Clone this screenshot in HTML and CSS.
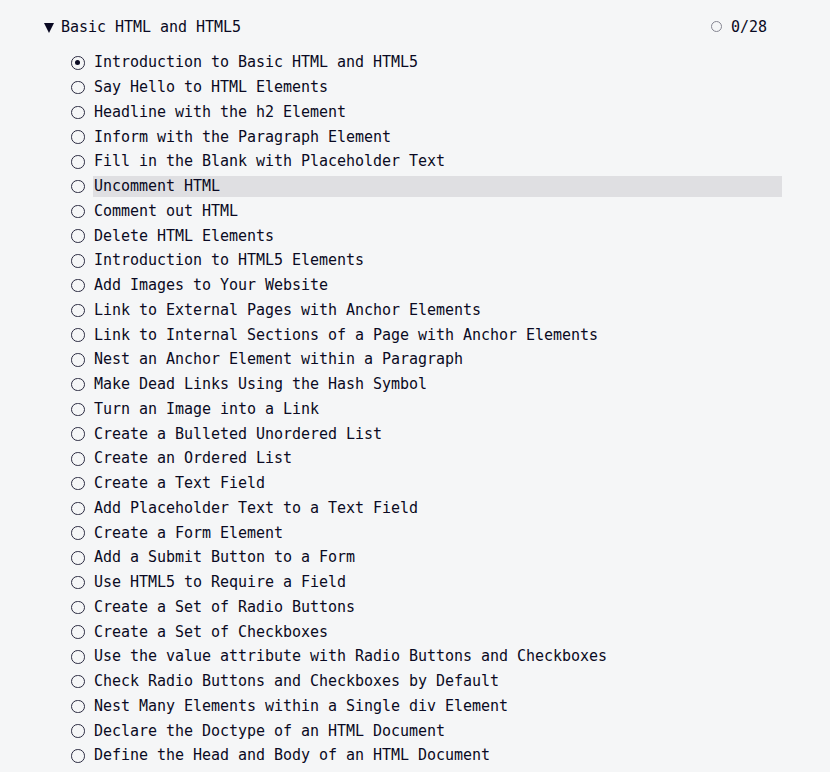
FILE: index.html
```html
<!DOCTYPE html>
<html>
<head>
<meta charset="utf-8">
<link rel="stylesheet" href="styles.css">
</head>
<body>
<div class="block">
  <div class="block-header">
    <svg class="caret" width="10" height="10" viewBox="0 0 10 10"><polygon points="0,0 10,0 5,10" fill="#0a0a23"/></svg>
    <span class="title">Basic HTML and HTML5</span>
    <span class="count"><span class="count-ring"></span>0/28</span>
  </div>
  <ul class="steps">
    <li class="step"><span class="radio checked"></span><span class="label">Introduction to Basic HTML and HTML5</span></li>
    <li class="step"><span class="radio"></span><span class="label">Say Hello to HTML Elements</span></li>
    <li class="step"><span class="radio"></span><span class="label">Headline with the h2 Element</span></li>
    <li class="step"><span class="radio"></span><span class="label">Inform with the Paragraph Element</span></li>
    <li class="step"><span class="radio"></span><span class="label">Fill in the Blank with Placeholder Text</span></li>
    <li class="step"><span class="radio"></span><span class="label hover">Uncomment HTML</span></li>
    <li class="step"><span class="radio"></span><span class="label">Comment out HTML</span></li>
    <li class="step"><span class="radio"></span><span class="label">Delete HTML Elements</span></li>
    <li class="step"><span class="radio"></span><span class="label">Introduction to HTML5 Elements</span></li>
    <li class="step"><span class="radio"></span><span class="label">Add Images to Your Website</span></li>
    <li class="step"><span class="radio"></span><span class="label">Link to External Pages with Anchor Elements</span></li>
    <li class="step"><span class="radio"></span><span class="label">Link to Internal Sections of a Page with Anchor Elements</span></li>
    <li class="step"><span class="radio"></span><span class="label">Nest an Anchor Element within a Paragraph</span></li>
    <li class="step"><span class="radio"></span><span class="label">Make Dead Links Using the Hash Symbol</span></li>
    <li class="step"><span class="radio"></span><span class="label">Turn an Image into a Link</span></li>
    <li class="step"><span class="radio"></span><span class="label">Create a Bulleted Unordered List</span></li>
    <li class="step"><span class="radio"></span><span class="label">Create an Ordered List</span></li>
    <li class="step"><span class="radio"></span><span class="label">Create a Text Field</span></li>
    <li class="step"><span class="radio"></span><span class="label">Add Placeholder Text to a Text Field</span></li>
    <li class="step"><span class="radio"></span><span class="label">Create a Form Element</span></li>
    <li class="step"><span class="radio"></span><span class="label">Add a Submit Button to a Form</span></li>
    <li class="step"><span class="radio"></span><span class="label">Use HTML5 to Require a Field</span></li>
    <li class="step"><span class="radio"></span><span class="label">Create a Set of Radio Buttons</span></li>
    <li class="step"><span class="radio"></span><span class="label">Create a Set of Checkboxes</span></li>
    <li class="step"><span class="radio"></span><span class="label">Use the value attribute with Radio Buttons and Checkboxes</span></li>
    <li class="step"><span class="radio"></span><span class="label">Check Radio Buttons and Checkboxes by Default</span></li>
    <li class="step"><span class="radio"></span><span class="label">Nest Many Elements within a Single div Element</span></li>
    <li class="step"><span class="radio"></span><span class="label">Declare the Doctype of an HTML Document</span></li>
    <li class="step"><span class="radio"></span><span class="label">Define the Head and Body of an HTML Document</span></li>
  </ul>
</div>
</body>
</html>
```
FILE: styles.css
```css
html, body {
  margin: 0;
  padding: 0;
  background: #f5f6f7;
}
body {
  font-family: "DejaVu Sans Mono", "Liberation Mono", monospace;
  font-size: 15px;
  color: #0a0a23;
  letter-spacing: -0.03px;
}
.block {
  width: 738px;
  margin-left: 44px;
  padding-top: 15px;
}
.block-header {
  display: flex;
  align-items: center;
  height: 25px;
}
.caret {
  display: block;
  margin-right: 7px;
  margin-top: 1px;
}
.title {
  flex: 1;
  line-height: 25px;
}
.count {
  display: flex;
  align-items: center;
  margin-right: 15px;
  margin-top: -2px;
}
.count-ring {
  width: 9px;
  height: 9px;
  border: 1.5px solid #858591;
  border-radius: 50%;
  margin-right: 9px;
}
.steps {
  list-style: none;
  margin: 10.5px 0 0 0;
  padding: 0 0 0 27px;
}
.step {
  display: flex;
  align-items: center;
  height: 24.75px;
}
.radio {
  box-sizing: border-box;
  width: 13.5px;
  height: 13.5px;
  border: 1.2px solid #2a2a40;
  border-radius: 50%;
  background: #f5f6f7;
  margin-right: 8.5px;
  flex: none;
  position: relative;
}
.radio.checked::after {
  content: "";
  position: absolute;
  left: 3px;
  top: 3px;
  width: 5.1px;
  height: 5.1px;
  border-radius: 50%;
  background: #0a0a23;
}
.label {
  flex: 1;
  height: 21px;
  line-height: 21px;
  padding-left: 1px;
  white-space: nowrap;
}
.label.hover {
  background: #dfdfe2;
}
```
